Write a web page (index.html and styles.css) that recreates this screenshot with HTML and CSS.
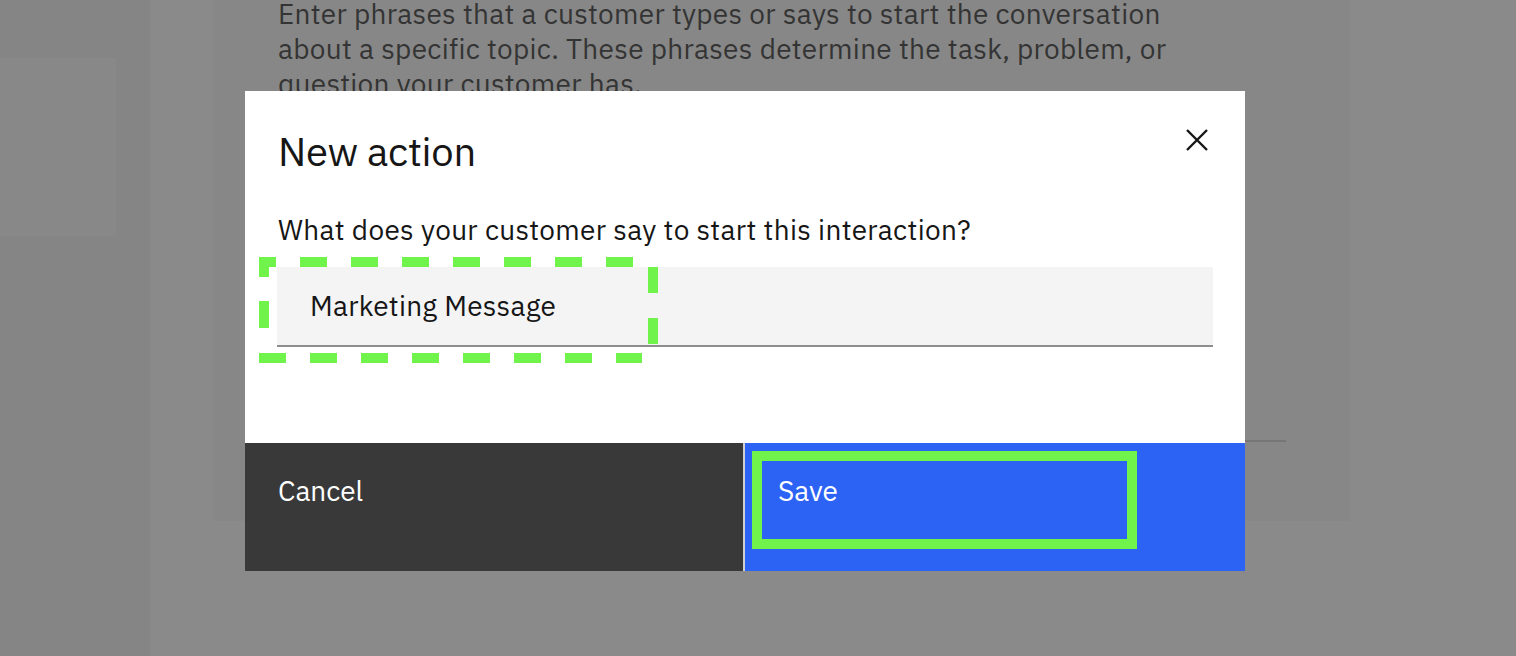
FILE: index.html
```html
<!DOCTYPE html>
<html lang="en">
<head>
<meta charset="utf-8">
<title>New action</title>
<link rel="stylesheet" href="styles.css">
</head>
<body>
<div class="page">
  <aside class="side">
    <div class="side-box"></div>
  </aside>
  <main class="panel">
    <p class="panel-text">Enter phrases that a customer types or says to start the conversation about a specific topic. These phrases determine the task, problem, or question your customer has.</p>
    <div class="panel-field"></div>
  </main>
</div>

<div class="modal" role="dialog" aria-label="New action">
  <div class="modal-body">
    <div class="modal-header">
      <h2 class="modal-title">New action</h2>
      <button class="close" aria-label="Close">
        <svg width="22" height="22" viewBox="0 0 22 22"><path d="M1 1L21 21M21 1L1 21" stroke="#161616" stroke-width="2.4" fill="none"/></svg>
      </button>
    </div>
    <label class="label">What does your customer say to start this interaction?</label>
    <div class="input">
      <span class="input-text">Marketing Message</span>
      <svg class="dash" width="1" height="1">
        <g stroke="#70f34a" stroke-width="10" fill="none">
          <line x1="-18" y1="-5" x2="356" y2="-5" stroke-dasharray="27 24" stroke-dashoffset="10"/>
          <line x1="-18" y1="91" x2="365" y2="91" stroke-dasharray="27 24"/>
          <line x1="-13" y1="-10" x2="-13" y2="84" stroke-dasharray="27 24" stroke-dashoffset="7"/>
          <line x1="376" y1="0" x2="376" y2="78" stroke-dasharray="26 25"/>
        </g>
      </svg>
    </div>
  </div>
  <div class="modal-footer">
    <button class="btn btn-secondary">Cancel</button>
    <button class="btn btn-primary">Save<span class="focus-ring"></span></button>
  </div>
</div>
</body>
</html>
```

FILE: styles.css
```css
* { box-sizing: border-box; }
html, body { margin: 0; padding: 0; }
body {
  width: 1516px;
  height: 656px;
  overflow: hidden;
  background: #8a8a8a;
  font-family: "IBM Plex Sans", Inter, "Liberation Sans", sans-serif;
  position: relative;
}
.page {
  display: flex;
  align-items: flex-start;
  height: 656px;
}
.side {
  width: 150px;
  height: 656px;
  background: #858585;
  padding-top: 58px;
}
.side-box {
  width: 116px;
  height: 178px;
  background: #888888;
}
.panel {
  margin-left: 64px;
  width: 1136px;
  height: 521px;
  background: #878787;
  padding-left: 64px;
  padding-top: 1px;
}
.panel-text {
  margin: -5px 0 0 0;
  width: 910px;
  font-size: 28px;
  line-height: 35px;
  letter-spacing: 0.3px;
  color: #343434;
}
.panel-field {
  margin-top: 339px;
  width: 1008px;
  height: 2px;
  background: #767676;
}
.modal {
  position: absolute;
  left: 245px;
  top: 91px;
  width: 1000px;
  height: 480px;
  background: #ffffff;
  display: flex;
  flex-direction: column;
}
.modal-body {
  flex: 1;
  padding: 32px 32px 0 33px;
}
.modal-header {
  display: flex;
  justify-content: space-between;
  align-items: flex-start;
}
.modal-title {
  margin: 0;
  font-size: 40px;
  line-height: 56px;
  font-weight: 400;
  color: #161616;
  letter-spacing: -0.3px;
}
.close {
  border: 0;
  background: none;
  padding: 0;
  margin: 6px 5px 0 0;
  width: 22px;
  height: 22px;
  display: flex;
}
.label {
  display: block;
  margin-top: 35px;
  font-size: 28px;
  line-height: 32px;
  letter-spacing: 0.32px;
  color: #161616;
}
.input {
  position: relative;
  margin-top: 21px;
  margin-left: -1px;
  height: 80px;
  background: #f4f4f4;
  border-bottom: 2px solid #8d8d8d;
  display: flex;
  align-items: center;
  padding-left: 33px;
}
.input-text {
  font-size: 28px;
  line-height: 34px;
  letter-spacing: 0.25px;
  color: #161616;
}
.dash {
  position: absolute;
  left: 0;
  top: 0;
  overflow: visible;
}
.modal-footer {
  display: flex;
  height: 128px;
  background: #d0d0d0;
  gap: 2px;
}
.btn {
  position: relative;
  border: 0;
  margin: 0;
  font-family: inherit;
  font-size: 28px;
  line-height: 36px;
  color: #ffffff;
  text-align: left;
  padding: 30px 0 0 33px;
  display: flex;
  align-items: flex-start;
}
.btn-secondary {
  width: 498px;
  background: #393939;
}
.btn-primary {
  flex: 1;
  background: #2c63f5;
}
.focus-ring {
  position: absolute;
  left: 7px;
  top: 8px;
  width: 385px;
  height: 98px;
  border: 10px solid #70f34a;
}
```
